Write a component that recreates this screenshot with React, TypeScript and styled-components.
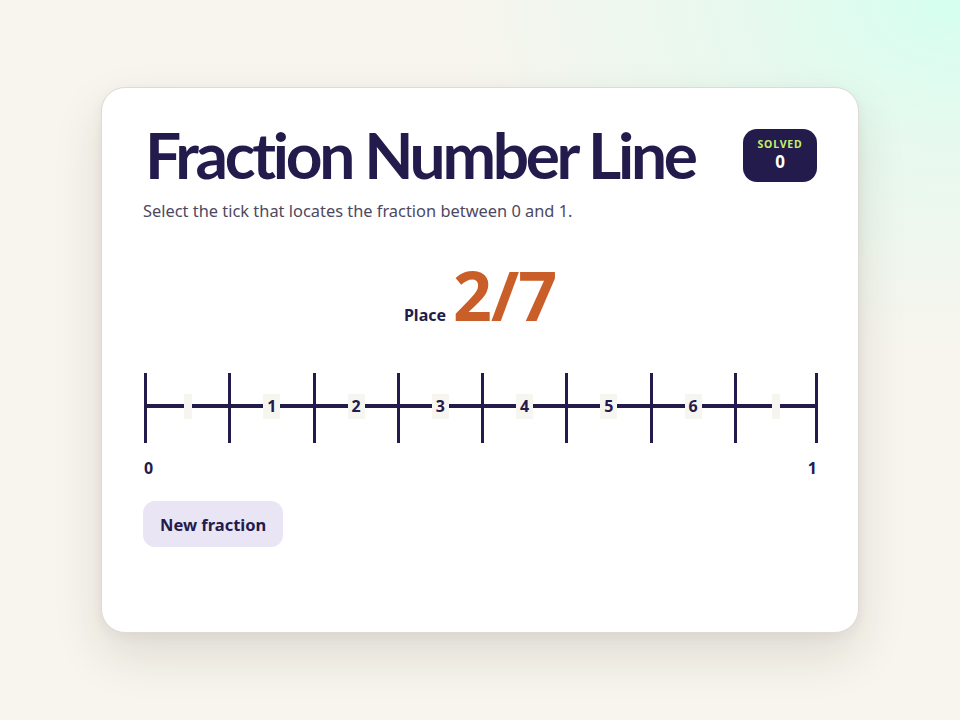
import React from "react";
import styled, { createGlobalStyle } from "styled-components";

const GlobalStyle = createGlobalStyle`
  * { box-sizing: border-box; }
  html, body { margin: 0; padding: 0; }
  body {
    font-family: "Noto Sans", "Open Sans", sans-serif;
    color: #221b4b;
    background: #f8f5ee;
  }
`;

const Page = styled.div`
  width: 960px;
  height: 720px;
  display: flex;
  align-items: center;
  justify-content: center;
  background:
    radial-gradient(ellipse 520px 360px at 100% 0%, rgba(212, 255, 240, 1) 0%, rgba(220, 252, 238, 0.6) 40%, rgba(248, 245, 238, 0) 100%),
    #f8f5ee;
`;

const Card = styled.div`
  width: 758px;
  height: 546px;
  background: #ffffff;
  border: 1px solid #dedbd6;
  border-radius: 24px;
  box-shadow: 0 22px 50px rgba(40, 30, 20, 0.12), 0 4px 12px rgba(40, 30, 20, 0.05);
  padding: 34px 41px 40px 41px;
  display: flex;
  flex-direction: column;
  & > * { flex-shrink: 0; }
`;

const Header = styled.div`
  display: flex;
  justify-content: space-between;
  align-items: center;
  gap: 16px;
`;

const Title = styled.h1`
  margin: 0;
  font-family: Lato, "Noto Sans", sans-serif;
  font-weight: 700;
  font-size: 64px;
  line-height: 66px;
  letter-spacing: -3.3px;
  color: #221b4b;
  padding-left: 2px;
  white-space: nowrap;
`;

const Badge = styled.div`
  flex-shrink: 0;
  width: 74px;
  height: 53px;
  border-radius: 14px;
  background: #221b4b;
  display: flex;
  flex-direction: column;
  align-items: center;
  justify-content: center;
  gap: 1px;
`;

const BadgeLabel = styled.span`
  font-size: 10.5px;
  font-weight: 700;
  letter-spacing: 0.08em;
  color: #c6f06a;
  line-height: 13px;
`;

const BadgeValue = styled.span`
  font-size: 17px;
  font-weight: 700;
  color: #ffffff;
  line-height: 20px;
`;

const Subtitle = styled.p`
  margin: 12px 0 0 0;
  font-size: 16.4px;
  line-height: 22px;
  color: #4d4862;
`;

const Prompt = styled.div`
  margin-top: 38px;
  display: flex;
  justify-content: center;
  align-items: baseline;
  gap: 7px;
`;

const PromptLabel = styled.span`
  font-size: 16px;
  font-weight: 700;
  color: #221b4b;
`;

const PromptFraction = styled.span`
  font-size: 68px;
  line-height: 70px;
  font-weight: 700;
  color: #c95e28;
  letter-spacing: -1px;
`;

const Line = styled.div`
  margin-top: 43px;
  display: grid;
  grid-template-columns: repeat(8, 1fr);
  height: 70px;
  margin-left: 1px;
  margin-right: -1px;
`;

const Segment = styled.button<{ $last?: boolean }>`
  appearance: none;
  margin: 0;
  padding: 0;
  border: none;
  border-left: 3px solid #221b4b;
  border-right: ${(p) => (p.$last ? "3px solid #221b4b" : "none")};
  background: linear-gradient(
    to bottom,
    transparent 31px,
    #221b4b 31px,
    #221b4b 35px,
    transparent 35px
  );
  display: flex;
  align-items: flex-start;
  justify-content: center;
  padding-top: 21px;
  cursor: pointer;
  font-family: inherit;
`;

const TickLabel = styled.span`
  display: block;
  background: #f7f5ef;
  min-width: 8px;
  height: 25px;
  padding: 0 4px;
  font-size: 16px;
  line-height: 25px;
  font-weight: 700;
  color: #221b4b;
`;

const Ends = styled.div`
  margin-top: 15px;
  display: flex;
  justify-content: space-between;
  font-size: 16px;
  line-height: 20px;
  font-weight: 700;
  color: #221b4b;
  padding: 0 0 0 1px;
`;

const Button = styled.button`
  margin-top: 23px;
  align-self: flex-start;
  height: 46px;
  padding: 0 17px;
  border: none;
  border-radius: 12px;
  background: #e9e5f5;
  color: #221b4b;
  font-family: inherit;
  font-size: 16.5px;
  font-weight: 700;
  cursor: pointer;
`;

const labels = ["", "1", "2", "3", "4", "5", "6", ""];

export default function App() {
  return (
    <>
      <GlobalStyle />
      <Page>
        <Card>
          <Header>
            <Title>Fraction Number Line</Title>
            <Badge>
              <BadgeLabel>SOLVED</BadgeLabel>
              <BadgeValue>0</BadgeValue>
            </Badge>
          </Header>
          <Subtitle>Select the tick that locates the fraction between 0 and 1.</Subtitle>
          <Prompt>
            <PromptLabel>Place</PromptLabel>
            <PromptFraction>2/7</PromptFraction>
          </Prompt>
          <Line>
            {labels.map((l, i) => (
              <Segment key={i} $last={i === labels.length - 1}>
                <TickLabel>{l}</TickLabel>
              </Segment>
            ))}
          </Line>
          <Ends>
            <span>0</span>
            <span>1</span>
          </Ends>
          <Button>New fraction</Button>
        </Card>
      </Page>
    </>
  );
}
